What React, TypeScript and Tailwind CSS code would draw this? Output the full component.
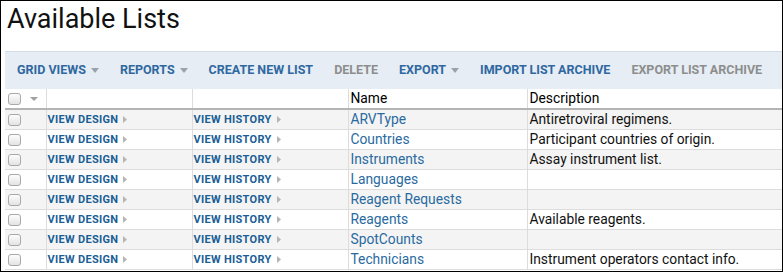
import React from "react";

const rows: { name: string; desc: string }[] = [
  { name: "ARVType", desc: "Antiretroviral regimens." },
  { name: "Countries", desc: "Participant countries of origin." },
  { name: "Instruments", desc: "Assay instrument list." },
  { name: "Languages", desc: "" },
  { name: "Reagent Requests", desc: "" },
  { name: "Reagents", desc: "Available reagents." },
  { name: "SpotCounts", desc: "" },
  { name: "Technicians", desc: "Instrument operators contact info." },
];

function Caret() {
  return (
    <svg width="8" height="5" viewBox="0 0 8 5" className="ml-[5px] inline-block">
      <path d="M0 0 L8 0 L4 5 Z" fill="#9aa3ab" />
    </svg>
  );
}

function RightTri() {
  return (
    <svg width="4" height="7" viewBox="0 0 4 7" className="ml-[5px] inline-block">
      <path d="M0 0 L4 3.5 L0 7 Z" fill="#b5b5b5" />
    </svg>
  );
}

function Checkbox() {
  return (
    <span className="inline-block h-[12px] w-[13px] rounded-[3px] border border-[#a9a9a9] bg-gradient-to-b from-[#fdfdfd] to-[#e3e3e3]" />
  );
}

function TbBtn({ label, caret, disabled }: { label: string; caret?: boolean; disabled?: boolean }) {
  return (
    <span
      className={
        "flex items-center text-[12.5px] font-bold " +
        (disabled ? "text-[#8d8d8d]" : "text-[#2f68a0]")
      }
    >
      {label}
      {caret && <Caret />}
    </span>
  );
}

export default function App() {
  return (
    <div
      className="h-[272px] w-[783px] overflow-hidden border border-black bg-white"
      style={{ fontFamily: "Roboto, 'Liberation Sans', sans-serif" }}
    >
      <div className="h-[50px] pl-[6px] pt-[1px] text-[27px] leading-[34px] text-[#111]">Available Lists</div>
      <div className="ml-[4px]">
        <div className="flex h-[38px] items-center gap-[21px] border-t border-[#d3dce4] bg-[#e6edf4] pl-[12px]">
          <TbBtn label="GRID VIEWS" caret />
          <TbBtn label="REPORTS" caret />
          <TbBtn label="CREATE NEW LIST" />
          <TbBtn label="DELETE" disabled />
          <TbBtn label="EXPORT" caret />
          <TbBtn label="IMPORT LIST ARCHIVE" />
          <TbBtn label="EXPORT LIST ARCHIVE" disabled />
        </div>
        <table className="w-[778px] table-fixed border-collapse text-[13.8px] leading-[19px]">
          <colgroup>
            <col className="w-[41px]" />
            <col className="w-[146px]" />
            <col className="w-[156px]" />
            <col className="w-[179px]" />
            <col />
          </colgroup>
          <thead>
            <tr className="border-b-2 border-[#b4b4b4] bg-white">
              <th className="border-r border-[#dcdcdc] p-0 pl-[3px] text-left font-normal">
                <span className="flex items-center">
                  <Checkbox />
                  <svg width="8" height="4" viewBox="0 0 8 4" className="ml-[9px]">
                    <path d="M0 0 L8 0 L4 4 Z" fill="#a0a0a0" />
                  </svg>
                </span>
              </th>
              <th className="border-r border-[#dcdcdc] p-0" />
              <th className="border-r border-[#dcdcdc] p-0" />
              <th className="border-r border-[#dcdcdc] p-0 pl-[2px] text-left font-normal text-black">Name</th>
              <th className="p-0 pl-[2px] text-left font-normal text-black">Description</th>
            </tr>
          </thead>
          <tbody>
            {rows.map((r, i) => (
              <tr
                key={r.name}
                className={"border-b border-[#dcdcdc] " + (i % 2 === 0 ? "bg-[#f4f4f4]" : "bg-white")}
              >
                <td className="h-[19px] border-r border-[#dcdcdc] p-0 pl-[3px] align-middle">
                  <span className="flex items-center">
                    <Checkbox />
                  </span>
                </td>
                <td className="border-r border-[#dcdcdc] p-0 pl-[1px]">
                  <span className="flex items-center text-[11px] font-bold tracking-[0.3px] text-[#1a5e96]">
                    VIEW DESIGN
                    <RightTri />
                  </span>
                </td>
                <td className="border-r border-[#dcdcdc] p-0 pl-[1px]">
                  <span className="flex items-center text-[11px] font-bold tracking-[0.3px] text-[#1a5e96]">
                    VIEW HISTORY
                    <RightTri />
                  </span>
                </td>
                <td className="border-r border-[#dcdcdc] p-0 pl-[2px] text-[#2a6aa0]">{r.name}</td>
                <td className="p-0 pl-[2px] text-[#111]">{r.desc}</td>
              </tr>
            ))}
          </tbody>
        </table>
      </div>
    </div>
  );
}
